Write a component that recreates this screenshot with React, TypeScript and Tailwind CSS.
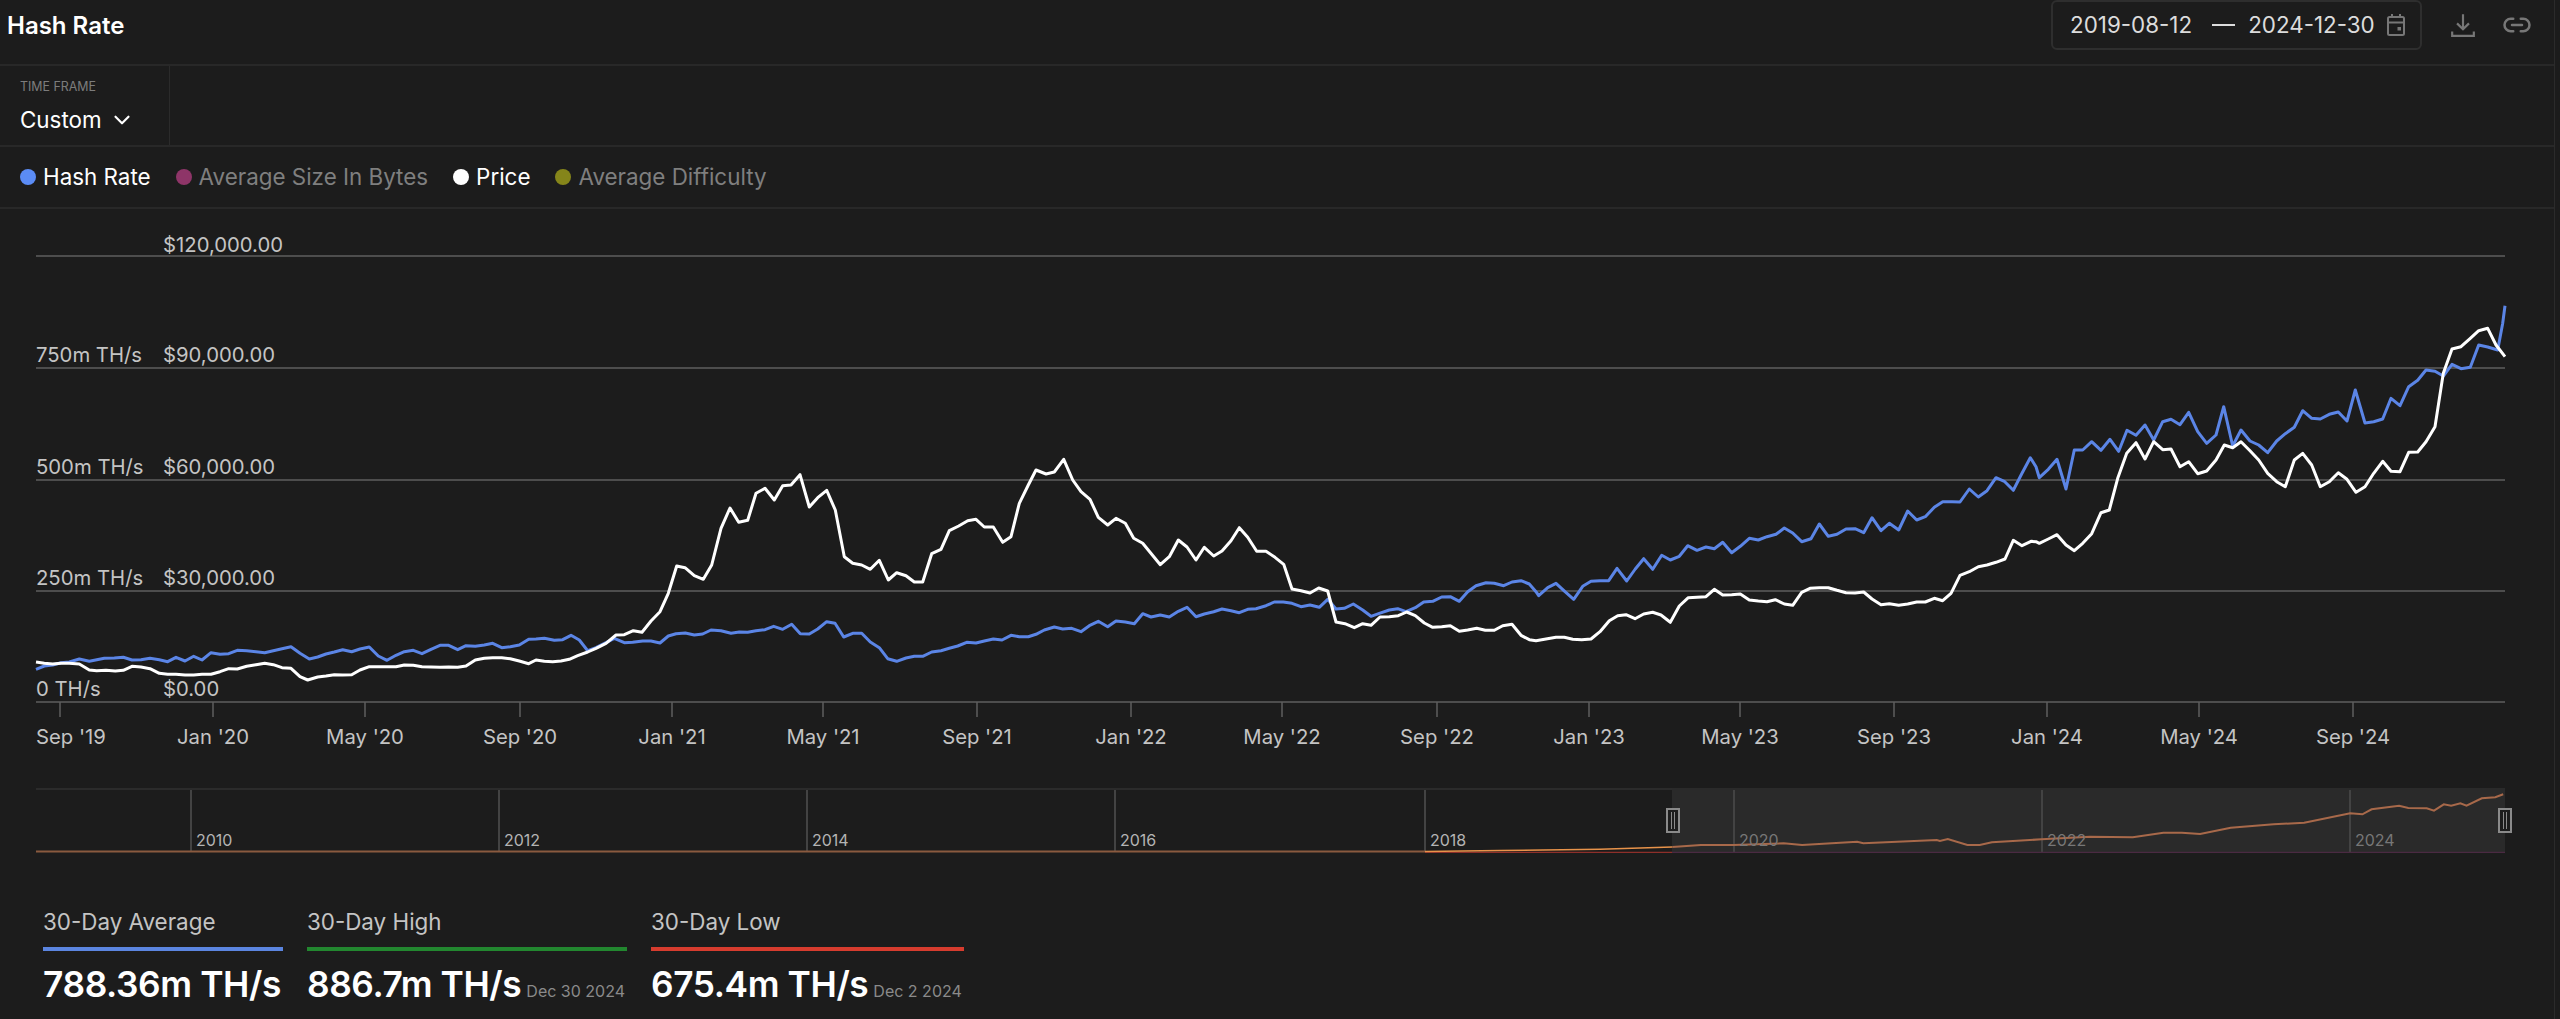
import React from "react";
import { ChevronDown, Link2 } from "lucide-react";

type P = [number, number];
const conv = (ox: number, oy: number, pts: number[][]): P[] => pts.map(([x, y]) => [ox + x / 3, oy + y / 3]);
const str = (pts: P[]) => pts.map(([x, y]) => `${x.toFixed(1)},${y.toFixed(1)}`).join(" ");

const blue: P[] = [
  ...conv(36, 580, [[0,268],[25,258],[50,255],[75,248],[100,246],[130,237],[160,244],[205,235],[235,234],[262,232],[288,240],[315,239],[342,235],[370,239],[395,245],[420,232],[447,243],[473,229],[498,240],[525,218],[552,223],[578,221],[604,211],[632,212],[660,215],[686,218],[712,212],[738,206],[765,200],[792,220],[820,237],[845,231],[870,222],[895,216],[920,209],[947,215],[972,207],[1000,201],[1027,228],[1053,241],[1080,226],[1105,215],[1132,211],[1158,221],[1185,208],[1212,196],[1238,196],[1265,209],[1290,197],[1318,199],[1345,195],[1370,190],[1397,203],[1423,200],[1450,195],[1478,178]]),
  ...conv(536, 460, [[0,537],[25,535],[55,541],[80,539],[105,526],[130,540],[155,572],[180,563],[210,548],[235,535],[265,548],[290,547],[320,543],[345,543],[372,549],[397,528],[420,521],[448,519],[475,525],[500,522],[525,510],[555,512],[585,520],[610,516],[635,517],[660,512],[687,509],[713,499],[740,508],[767,493],[793,521],[820,522],[845,507],[872,485],[897,490],[923,531],[950,520],[977,520],[1003,546],[1030,563],[1055,596],[1082,604],[1110,594],[1135,589],[1160,589],[1187,576],[1215,572],[1240,565],[1265,558],[1292,547],[1320,549],[1345,543],[1372,537],[1398,540],[1425,526],[1450,530],[1477,530]]),
  ...conv(1036, 450, [[0,553],[25,540],[55,531],[80,537],[107,535],[135,545],[160,527],[187,514],[215,530],[240,513],[268,516],[295,521],[320,491],[345,501],[373,495],[400,501],[427,484],[453,472],[480,500],[505,492],[533,485],[558,477],[585,482],[610,488],[635,478],[660,476],[690,467],[715,456],[742,456],[768,460],[795,470],[822,465],[850,472],[875,448],[900,477],[925,475],[952,462],[980,480],[1005,499],[1030,490],[1060,480],[1085,476],[1110,485],[1138,473],[1163,456],[1190,454],[1217,441],[1243,440],[1270,454],[1295,425],[1320,407],[1350,398],[1375,400],[1403,407],[1428,396],[1455,392],[1480,402]]),
  ...conv(1536, 430, [[0,485],[8,497],[35,473],[60,460],[87,485],[113,508],[140,469],[165,454],[192,452],[218,452],[243,415],[272,453],[298,417],[323,386],[350,418],[377,376],[403,390],[430,379],[455,347],[483,361],[510,351],[535,356],[560,337],[587,368],[613,349],[640,325],[667,330],[693,320],[720,313],[745,294],[770,309],[797,335],[825,326],[850,282],[877,319],[903,313],[930,297],[957,296],[983,308],[1008,263],[1035,302],[1060,280],[1088,300],[1115,243],[1142,270],[1168,260],[1195,232],[1220,215],[1248,215],[1272,216],[1300,177],[1327,201],[1353,182],[1380,143],[1405,154],[1432,181],[1458,130],[1483,83]]),
  ...conv(2036, 290, [[0,530],[10,563],[37,538],[63,508],[90,597],[115,480],[140,480],[167,455],[195,481],[222,448],[248,484],[273,421],[300,436],[327,405],[353,450],[380,395],[405,388],[432,404],[458,367],[485,425],[512,460],[540,435],[563,350],[590,468],[615,420],[642,453],[668,465],[695,488],[722,453],[748,431],[775,412],[800,362],[827,385],[853,387],[880,373],[907,366],[933,393],[958,300],[987,399],[1013,395],[1040,387],[1065,325],[1092,347],[1118,290],[1145,271],[1170,240],[1197,244],[1222,258],[1248,223],[1275,236],[1303,232],[1328,165],[1355,171],[1385,180],[1400,100],[1407,47]]),
];

const white: P[] = [
  ...conv(36, 580, [[0,246],[25,250],[50,252],[75,250],[100,250],[130,252],[160,270],[182,272],[210,271],[238,273],[262,271],[288,259],[315,261],[342,266],[370,280],[395,283],[420,283],[447,285],[473,285],[498,283],[525,283],[552,275],[578,266],[604,267],[632,259],[660,254],[686,250],[712,254],[738,263],[765,265],[792,290],[815,300],[845,291],[870,288],[895,284],[920,285],[947,284],[972,270],[1000,260],[1027,260],[1053,260],[1080,260],[1105,255],[1132,256],[1158,260],[1185,261],[1212,262],[1238,261],[1265,262],[1290,258],[1318,240],[1345,235],[1370,233],[1397,233],[1423,236],[1450,243],[1478,251]]),
  ...conv(536, 460, [[0,600],[25,604],[50,605],[75,603],[100,598],[125,587],[155,576],[180,565],[210,550],[240,525],[265,524],[292,512],[318,517],[345,483],[372,455],[397,400],[422,318],[447,323],[475,347],[502,358],[527,315],[555,205],[582,144],[608,187],[635,181],[660,100],[687,85],[715,120],[740,77],[765,75],[792,44],[820,141],[845,113],[872,91],[898,150],[925,290],[950,310],[977,315],[1003,328],[1030,301],[1057,360],[1082,338],[1110,347],[1135,366],[1160,366],[1187,281],[1215,268],[1240,212],[1268,198],[1295,182],[1320,178],[1345,201],[1372,201],[1400,247],[1425,230],[1450,130],[1477,75]]),
  ...conv(1036, 450, [[0,60],[30,72],[55,66],[83,28],[110,90],[135,125],[162,148],[187,202],[215,225],[240,205],[268,220],[293,265],[320,280],[347,313],[373,344],[400,320],[427,270],[453,291],[480,330],[505,292],[533,318],[558,303],[585,272],[610,233],[635,262],[662,304],[690,304],[717,322],[743,343],[768,417],[795,422],[822,429],[848,414],[875,423],[900,516],[927,521],[955,533],[980,521],[1005,526],[1032,501],[1060,500],[1087,497],[1112,486],[1138,497],[1165,519],[1190,532],[1217,530],[1243,527],[1270,544],[1295,540],[1322,535],[1348,541],[1375,541],[1400,527],[1428,523],[1455,556],[1480,569]]),
  ...conv(1536, 430, [[0,632],[30,627],[60,622],[85,622],[110,628],[137,629],[165,627],[192,605],[220,572],[245,557],[270,554],[297,566],[323,552],[350,547],[375,555],[403,577],[430,528],[457,503],[483,502],[510,500],[535,478],[560,495],[587,494],[613,492],[640,510],[667,513],[693,515],[718,509],[745,522],[770,526],[797,487],[822,475],[850,473],[877,473],[903,481],[930,488],[957,489],[983,486],[1008,507],[1035,524],[1060,521],[1088,526],[1115,522],[1142,516],[1168,516],[1195,505],[1220,512],[1245,490],[1272,436],[1300,425],[1327,410],[1353,405],[1380,397],[1407,387],[1432,331],[1458,347],[1485,334]]),
  ...conv(2036, 290, [[0,755],[10,760],[37,747],[63,734],[90,765],[115,782],[140,760],[167,731],[195,668],[220,660],[245,565],[272,490],[300,458],[327,507],[353,455],[380,479],[405,477],[432,530],[458,515],[485,551],[512,543],[540,510],[565,465],[590,473],[615,455],[642,482],[668,510],[695,550],[722,575],[748,590],[775,510],[800,490],[827,525],[853,590],[880,575],[907,548],[933,568],[960,607],[987,590],[1013,550],[1040,514],[1065,544],[1092,545],[1118,487],[1145,486],[1170,455],[1197,410],[1222,250],[1248,177],[1275,170],[1303,145],[1328,122],[1355,115],[1380,165],[1407,200]]),
];

const CHART_TOP = 209;
const gridYs = [256, 368, 480, 591, 702];
const xTicks: [number, string][] = [
  [60, "Sep '19"], [213, "Jan '20"], [365, "May '20"], [520, "Sep '20"], [672, "Jan '21"], [823, "May '21"],
  [977, "Sep '21"], [1131, "Jan '22"], [1282, "May '22"], [1437, "Sep '22"], [1589, "Jan '23"], [1740, "May '23"],
  [1894, "Sep '23"], [2047, "Jan '24"], [2199, "May '24"], [2353, "Sep '24"],
];
const leftLabels: [number, string][] = [[355, "750m TH/s"], [467, "500m TH/s"], [578, "250m TH/s"], [689, "0 TH/s"]];
const rightLabels: [number, string][] = [[245, "$120,000.00"], [355, "$90,000.00"], [467, "$60,000.00"], [578, "$30,000.00"], [689, "$0.00"]];

const MINI_LEFT = 36;
const MINI_TOP = 788;
const miniYears: [number, string, boolean][] = [
  [191, "2010", false], [499, "2012", false], [807, "2014", false], [1115, "2016", false], [1425, "2018", false],
  [1734, "2020", true], [2042, "2022", true], [2350, "2024", true],
];
const miniSel: P[] = [[0,268],[118,261],[165,255],[218,255],[300,250],[330,255],[420,245],[430,250],[550,240],[555,243],[568,237],[600,255],[620,255],[640,247],[721,238],[800,230],[870,232],[920,218],[950,218],[980,222],[1030,203],[1100,193],[1150,188],[1225,160],[1245,163],[1260,148],[1305,137],[1320,144],[1350,145],[1362,152],[1378,133],[1390,137],[1405,130],[1415,137],[1440,115],[1462,112],[1475,103]].map(([x, y]) => [1600 + x / 1.633, 760 + y / 3] as P);
const miniRise: P[] = [[1425,851.5],[1500,850.5],[1600,849.3],[1672.3,847]];
const miniAfterCut = miniSel.filter(([x]) => x >= 1672);

function Dot({ color }: { color: string }) {
  return <span className={`size-4 rounded-full ${color}`} />;
}

function Stat({ label, value, bar, date }: { label: string; value: string; bar: string; date?: string }) {
  return (
    <div className="flex flex-col">
      <div className="text-[22.4px] leading-[28px] text-[#c4c4c4]">{label}</div>
      <div className={`mt-[11px] h-[4px] ${bar}`} />
      <div className="mt-[12px] flex items-baseline gap-[5px] whitespace-nowrap pr-[2px]">
        <span className="text-[35.3px] font-semibold leading-[44px] tracking-[-0.4px] text-white">{value}</span>
        {date && <span className="text-[16px] text-[#8a8a8a]">{date}</span>}
      </div>
    </div>
  );
}

export default function App() {
  return (
    <div className="h-[1019px] w-full overflow-hidden bg-[#1c1c1c] font-['Inter',sans-serif]">
      <div className="h-full w-[2555px] border-r border-[#2b2b2b]">
        <header className="flex h-[66px] items-start justify-between border-b-2 border-[#282828] pl-[7px]">
          <h1 className="mt-[11px] text-[24px] font-semibold leading-[30px] text-white">Hash Rate</h1>
          <div className="flex items-center">
            <div className="flex h-[50px] w-[371px] items-center rounded-[6px] border-2 border-[#2e2e2e] pl-[17px] text-[22.4px] text-[#dcdcdc]">
              <span>2019-08-12</span>
              <span className="ml-[20px] h-[2px] w-[23px] bg-[#dcdcdc]" />
              <span className="ml-[13px]">2024-12-30</span>
              <svg viewBox="0 0 18 22" className="ml-[12px] h-[22px] w-[18px] text-[#777]" fill="none" stroke="currentColor" strokeWidth="2">
                <rect x="1" y="3" width="16" height="18" rx="1.5" />
                <path d="M1 8.5h16M5 0v4M13 0v4" />
                <rect x="10.5" y="13" width="3.5" height="3.5" fill="currentColor" stroke="none" />
              </svg>
            </div>
            <svg viewBox="0 0 24 24" className="ml-[28px] size-[26px] text-[#777]" fill="none" stroke="currentColor" strokeWidth="2">
              <path d="M12 2v14M6.5 10.5 12 16l5.5-5.5M2 18v4h20v-4" />
            </svg>
            <Link2 className="ml-[26px] mr-[22px] size-[30px] text-[#777]" strokeWidth={2} />
          </div>
        </header>

        <div className="flex h-[81px] border-b-2 border-[#282828]">
          <div className="flex w-[170px] flex-col border-r border-[#2b2b2b] pl-[20px]">
            <span className="mt-[13px] text-[12.4px] leading-[16px] text-[#7c7c7c]">TIME FRAME</span>
            <div className="mt-[11px] flex items-center gap-[7px] text-[22.4px] leading-[28px] text-white">
              <span>Custom</span>
              <ChevronDown className="size-[26px]" strokeWidth={2} />
            </div>
          </div>
        </div>

        <div className="flex h-[62px] items-center gap-[25px] border-b-2 border-[#282828] pl-[20px] text-[22.4px]">
          <div className="flex items-center gap-[7px] text-white"><Dot color="bg-[#5b8cf5]" />Hash Rate</div>
          <div className="flex items-center gap-[7px] text-[#7f7f7f]"><Dot color="bg-[#8e3568]" />Average Size In Bytes</div>
          <div className="flex items-center gap-[7px] text-white"><Dot color="bg-white" />Price</div>
          <div className="flex items-center gap-[7px] text-[#7f7f7f]"><Dot color="bg-[#85851a]" />Average Difficulty</div>
        </div>

        <div className="relative h-[552px] text-[20.3px] text-[#c4c4c4]">
          <svg viewBox={`0 ${CHART_TOP} 2560 552`} className="absolute left-0 top-0 h-[552px] w-[2560px]" fill="none">
            {gridYs.map((y) => (
              <line key={y} x1="36" x2="2505" y1={y} y2={y} stroke="#5e5e5e" strokeWidth="1.6" />
            ))}
            {xTicks.map(([x]) => (
              <line key={x} x1={x} x2={x} y1="702" y2="717" stroke="#5e5e5e" strokeWidth="1.5" />
            ))}
            <polyline points={str(blue)} stroke="#5b85e6" strokeWidth="3" strokeLinejoin="round" />
            <polyline points={str(white)} stroke="#ffffff" strokeWidth="3" strokeLinejoin="round" />
          </svg>
          {leftLabels.map(([y, t]) => (
            <span key={t} className="absolute left-[36px] -translate-y-1/2 leading-[26px]" style={{ top: y - CHART_TOP }}>{t}</span>
          ))}
          {rightLabels.map(([y, t]) => (
            <span key={t} className="absolute left-[163px] -translate-y-1/2 leading-[26px]" style={{ top: y - CHART_TOP }}>{t}</span>
          ))}
          {xTicks.map(([x, t], i) => (
            <span
              key={t}
              className={`absolute top-[515px] whitespace-nowrap leading-[26px] ${i === 0 ? "" : "-translate-x-1/2"}`}
              style={{ left: i === 0 ? 36 : x }}
            >
              {t}
            </span>
          ))}
        </div>

        <div className="relative ml-[36px] mt-[27px] h-[65px] w-[2469px] border-t-2 border-[#2b2b2b]">
          <div className="absolute bottom-0 left-[1636px] top-[-2px] w-[833px] bg-[#2a2a2a]" />
          <svg viewBox={`${MINI_LEFT} ${MINI_TOP} 2480 65`} className="absolute left-0 top-[-2px] h-[65px] w-[2480px]" fill="none">
            {miniYears.map(([x, , dim]) => (
              <line key={x} x1={x} x2={x} y1="790" y2="852" stroke={dim ? "#555" : "#5e5e5e"} strokeWidth="1.2" />
            ))}
            <line x1="36" x2="1425" y1="851.5" y2="851.5" stroke="#8a5a3f" strokeWidth="2" />
            <line x1="1425" x2="1672" y1="852.5" y2="852.5" stroke="#8e2f2a" strokeWidth="1.5" />
            <line x1="1672" x2="2505" y1="852.5" y2="852.5" stroke="#4a2a42" strokeWidth="1.5" />
            <polyline points={str(miniRise)} stroke="#e8934a" strokeWidth="1.6" />
            <polyline points={str(miniAfterCut)} stroke="#a8694a" strokeWidth="2" />
          </svg>
          {miniYears.map(([x, t, dim]) => (
            <span
              key={t}
              className={`absolute top-[40px] text-[16px] leading-[20px] ${dim ? "text-[#777]" : "text-[#b4b4b4]"}`}
              style={{ left: x + 5 - MINI_LEFT }}
            >
              {t}
            </span>
          ))}
          <div className="absolute left-[1630px] top-[18px] flex h-[25px] w-[14px] items-center justify-center gap-[2px] border-2 border-[#8a8a8a] bg-[#1c1c1c]">
            <span className="h-[17px] w-px bg-[#8a8a8a]" />
            <span className="h-[17px] w-px bg-[#8a8a8a]" />
          </div>
          <div className="absolute left-[2462px] top-[18px] flex h-[25px] w-[14px] items-center justify-center gap-[2px] border-2 border-[#8a8a8a] bg-[#1c1c1c]">
            <span className="h-[17px] w-px bg-[#8a8a8a]" />
            <span className="h-[17px] w-px bg-[#8a8a8a]" />
          </div>
        </div>

        <div className="ml-[43px] mt-[55px] flex gap-[24px]">
          <Stat label="30-Day Average" value="788.36m TH/s" bar="bg-[#5b85e0]" />
          <Stat label="30-Day High" value="886.7m TH/s" bar="bg-[#22872f]" date="Dec 30 2024" />
          <Stat label="30-Day Low" value="675.4m TH/s" bar="bg-[#d63c2e]" date="Dec 2 2024" />
        </div>
      </div>
    </div>
  );
}
